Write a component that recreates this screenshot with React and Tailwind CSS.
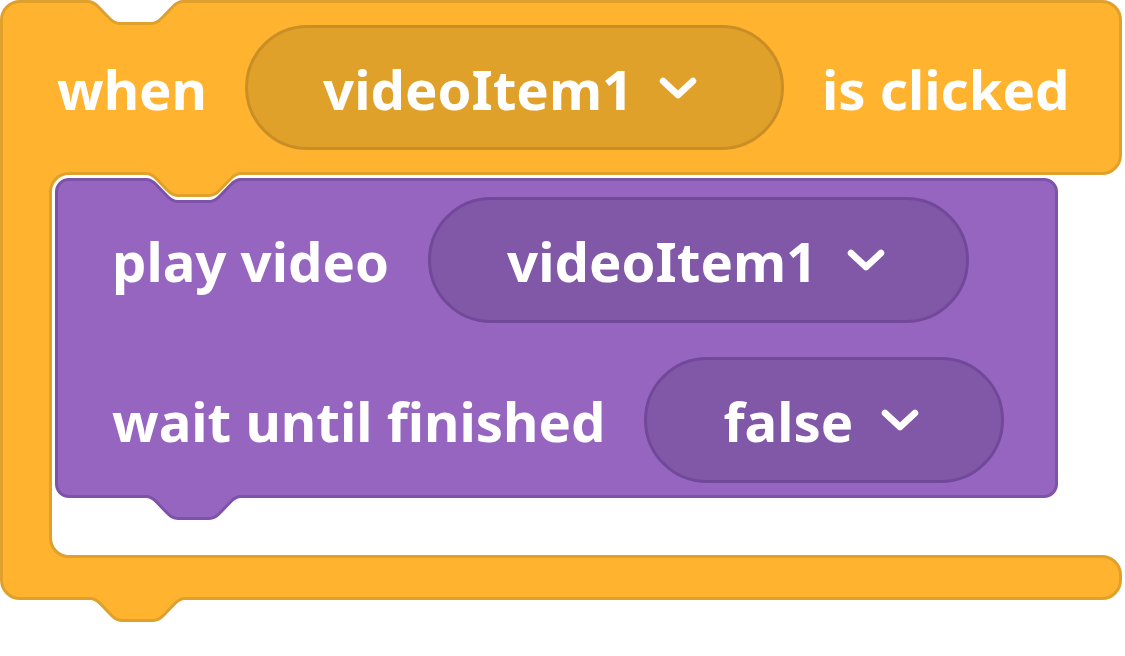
import React from 'react';

// Scratch-style notch profile, scaled to the block size in the picture
const notchPath = (s = 95 / 36, t = 22 / 8) =>
    `c ${2 * s},0 ${3 * s},${t} ${4 * s},${2 * t} l ${4 * s},${4 * t} c ${s},${t} ${2 * s},${2 * t} ${4 * s},${2 * t} h ${12 * s} c ${2 * s},0 ${3 * s},${-t} ${4 * s},${-2 * t} l ${4 * s},${-4 * t} c ${s},${-t} ${2 * s},${-2 * t} ${4 * s},${-2 * t}`;

const NOTCH = notchPath();

const Chevron = () => (
    <svg width="38" height="24" viewBox="0 0 38 24" className="shrink-0">
        <polyline points="4,5 19,19 34,5" fill="none" stroke="white" strokeWidth="6.5" strokeLinecap="round" strokeLinejoin="round" />
    </svg>
);

const Label = ({ children }) => (
    <span className="pt-[3px] text-[54.5px] leading-none font-bold text-white whitespace-nowrap">{children}</span>
);

export default function App() {
    return (
        <div className="w-[1125px] h-[656px] bg-white overflow-hidden font-['Noto_Sans','Open_Sans',sans-serif]">
            <div className="w-[1122px] flex flex-col">

                {/* hat row: when [videoItem1] is clicked */}
                <div className="relative h-[175px] bg-[#FFB32E] border-[3px] border-[#DFA12B] rounded-t-[20px] rounded-br-[20px] flex items-center pl-[54px] gap-[38px]">
                    <svg width="110" height="30" className="absolute left-[82px] -top-[3px] overflow-visible">
                        <path d={`M3,0 V1.5 ${NOTCH} V0 Z`} fill="white" />
                        <path d={`M3,1.5 ${NOTCH}`} fill="none" stroke="#DFA12B" strokeWidth="3" />
                    </svg>
                    <Label>when</Label>
                    <div className="flex items-center h-[125px] w-[539px] shrink-0 rounded-full bg-[#E0A12B] border-[3px] border-[#C98F24] pl-[75px] gap-[26px]">
                        <Label>videoItem1</Label>
                        <Chevron />
                    </div>
                    <Label>is clicked</Label>
                </div>

                {/* C mouth */}
                <div className="relative z-10 flex bg-white">
                    <div className="-my-[3px] w-[49px] shrink-0 bg-[#FFB32E] border-l-[3px] border-[#DFA12B]" />
                    <div className="-my-[3px] flex-1 mr-[20px] bg-[#FFB32E]">
                        <div className="h-full bg-white border-l-[3px] border-y-[3px] border-[#DFA12B] rounded-l-[20px] pt-[3px] pl-[3px] pb-[57px]">

                            {/* purple stack block */}
                            <div className="relative w-[1003px] h-[320px] bg-[#9565BF] border-[3px] border-[#7E52A9] rounded-[14px] flex flex-col pt-[16px] pl-[54px] gap-[34px]">
                                <svg width="110" height="35" className="absolute left-[85px] -top-[9px] overflow-visible">
                                    <path d={`M3,3 V7.5 ${NOTCH} V3 Z`} fill="white" />
                                    <path d={`M3,7.5 ${NOTCH}`} fill="none" stroke="#7E52A9" strokeWidth="3" />
                                    <path d={`M3,0 V1.5 ${NOTCH} V0 Z`} fill="#FFB32E" />
                                    <path d={`M3,1.5 ${NOTCH}`} fill="none" stroke="#DFA12B" strokeWidth="3" />
                                </svg>

                                <div className="flex items-center gap-[39px]">
                                    <Label>play video</Label>
                                    <div className="flex items-center h-[126px] w-[541px] shrink-0 rounded-full bg-[#8157A8] border-[3px] border-[#72489B] pl-[76px] gap-[30px]">
                                        <Label>videoItem1</Label>
                                        <Chevron />
                                    </div>
                                </div>

                                <div className="flex items-center gap-[39px]">
                                    <Label>wait until finished</Label>
                                    <div className="flex items-center h-[126px] w-[360px] shrink-0 rounded-full bg-[#8157A8] border-[3px] border-[#72489B] pl-[76px] gap-[28px]">
                                        <Label>false</Label>
                                        <Chevron />
                                    </div>
                                </div>

                                <svg width="110" height="30" className="absolute left-[85px] top-full overflow-visible">
                                    <path d={`M3,0 V1.5 ${NOTCH} V0 Z`} fill="#9565BF" />
                                    <path d={`M3,1.5 ${NOTCH}`} fill="none" stroke="#7E52A9" strokeWidth="3" />
                                </svg>
                            </div>
                        </div>
                    </div>
                </div>

                {/* bottom arm of the C */}
                <div className="relative h-[45px] bg-[#FFB32E] border-[3px] border-[#DFA12B] rounded-b-[20px] rounded-tr-[20px]">
                    <svg width="110" height="30" className="absolute left-[84px] top-full overflow-visible">
                        <path d={`M3,0 V1.5 ${NOTCH} V0 Z`} fill="#FFB32E" />
                        <path d={`M3,1.5 ${NOTCH}`} fill="none" stroke="#DFA12B" strokeWidth="3" />
                    </svg>
                </div>
            </div>
        </div>
    );
}
